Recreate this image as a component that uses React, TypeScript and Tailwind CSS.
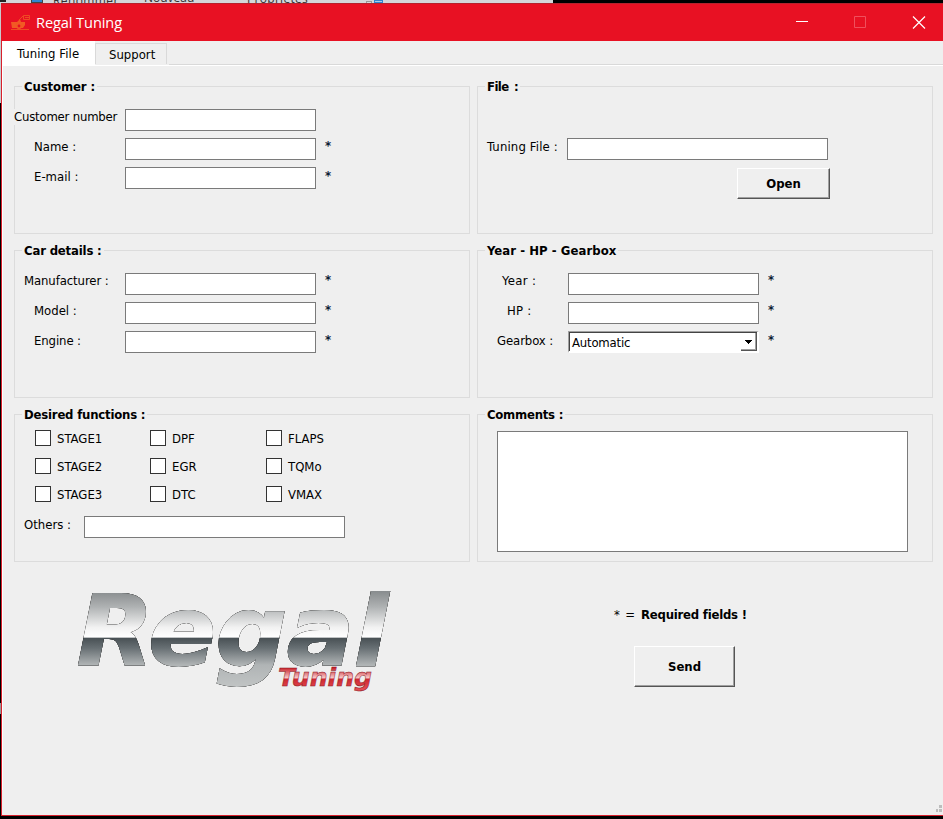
import React from 'react';

const ui = "font-['DejaVu_Sans_Condensed','DejaVu_Sans',sans-serif]";

function Group({ title, tracking = '', children }: { title: string; tracking?: string; children: React.ReactNode }) {
  return (
    <fieldset className="h-[156px] w-[456px] border border-[#dcdcdc]">
      <legend className={`ml-[7px] h-[17px] whitespace-nowrap px-[2px] text-[13px] font-bold leading-[17px] ${tracking}`}>{title}</legend>
      {children}
    </fieldset>
  );
}

function Labels({ items, className }: { items: [string, string][]; className: string }) {
  return (
    <div className={`shrink-0 whitespace-nowrap ${className}`}>
      {items.map(([text, cls]) => (
        <div key={text} className="flex h-[30px] items-center">
          <span className={`bg-[#efefef] leading-4 ${cls}`}>{text}</span>
        </div>
      ))}
    </div>
  );
}

function Field({ className = 'w-[191px]' }: { className?: string }) {
  return <input className={`block h-[22px] shrink-0 border border-[#7a7a7a] bg-white outline-none ${className}`} />;
}

function Stars({ count, className }: { count: number; className: string }) {
  return (
    <div className={`ml-[9px] text-[13px] font-bold ${className}`}>
      {Array.from({ length: count }, (_, i) => (
        <div key={i} className="h-[30px] leading-[30px] text-[#0b1c33]">*</div>
      ))}
    </div>
  );
}

function Check({ label }: { label: string }) {
  return (
    <label className="flex h-4 items-center gap-[6px] whitespace-nowrap leading-4">
      <span className="size-4 shrink-0 border border-[#333] bg-white" />
      <span className="pt-[2px]">{label}</span>
    </label>
  );
}

function Push({ label, className }: { label: string; className: string }) {
  return (
    <button className={`border border-b-[#555] border-l-white border-r-[#555] border-t-white font-bold shadow-[inset_-1px_-1px_0_#a0a0a0] ${className}`}>
      {label}
    </button>
  );
}

function Logo() {
  return (
    <svg width="345" height="124" viewBox="60 580 345 124" className="block">
      <defs>
        <linearGradient id="chrome" gradientUnits="userSpaceOnUse" x1="0" y1="590" x2="0" y2="694">
          <stop offset="0" stopColor="#85898b" />
          <stop offset=".16" stopColor="#aeb1b2" />
          <stop offset=".36" stopColor="#f2f2f2" />
          <stop offset=".455" stopColor="#ffffff" />
          <stop offset=".46" stopColor="#485054" />
          <stop offset=".56" stopColor="#687074" />
          <stop offset=".72" stopColor="#b0b4b5" />
          <stop offset="1" stopColor="#c6c9c9" />
        </linearGradient>
        <linearGradient id="ruby" gradientUnits="userSpaceOnUse" x1="0" y1="667" x2="0" y2="692">
          <stop offset="0" stopColor="#c5141d" />
          <stop offset=".42" stopColor="#f6c4c5" />
          <stop offset=".5" stopColor="#cf2a32" />
          <stop offset="1" stopColor="#e8555a" />
        </linearGradient>
      </defs>
      <g className="[filter:drop-shadow(0_0_.6px_#222)_drop-shadow(0_0_.4px_#444)]">
        <text x="77" y="664.5" fontFamily="DejaVu Sans" fontWeight="700" fontStyle="italic" fontSize="97" textLength="311" lengthAdjust="spacingAndGlyphs" fill="url(#chrome)" stroke="url(#chrome)" strokeWidth="1.8">Regal</text>
      </g>
      <text x="278" y="686" fontFamily="DejaVu Sans" fontWeight="700" fontStyle="italic" fontSize="25" textLength="94" lengthAdjust="spacingAndGlyphs" fill="url(#ruby)" stroke="#8a161e" strokeWidth=".5">Tuning</text>
    </svg>
  );
}

export default function App() {
  return (
    <div className={`flex h-[819px] w-[943px] flex-col overflow-hidden bg-black text-[13px] text-black ${ui}`}>
      <div className="relative h-[3px] w-[553px] shrink-0 overflow-hidden bg-[#d4d7da] font-['Open_Sans',sans-serif] text-[12px] leading-4 text-[#333]">
        <span className="absolute left-0 top-0 h-[2px] w-[6px] bg-[#222]" />
        <span className="absolute left-[31px] top-0 h-[3px] w-[12px] border border-t-0 border-[#444] bg-[#2f86d0]" />
        <span className="absolute left-[53px] top-[-7px] tracking-[.4px]">Renommer</span>
        <span className="absolute left-[144px] top-[-10px]">Nouveau</span>
        <span className="absolute left-[247px] top-[-9px] tracking-[.3px]">Propriétés</span>
        <span className="absolute left-[366px] top-[1px] h-[3px] w-[6px] border border-[#999]" />
        <span className="absolute left-[374px] top-0 h-[3px] w-[9px] border border-[#2f86d0] bg-[#a9cdec]" />
      </div>
      <div className="flex h-[813px] shrink-0">
        <div className="w-px shrink-0 pb-[77px]">
          <div className="h-[100px] bg-[#c8cbce]" />
          <div className="mt-[600px] h-[11px] bg-[#999]" />
        </div>
        <main className="flex w-[942px] flex-col border-b border-l border-[#d8202c] bg-[#efefef]">
          <header className="-ml-px flex h-[38px] shrink-0 items-center border-t border-[#b5222c] bg-[#e81123] pl-[10px] text-white">
            <svg width="20" height="18" viewBox="0 0 20 18" fill="none" className="mr-[5px]">
              <path d="M0 8h6l3-3 1 3h4v3l-2 3H1z" fill="#f15a24" />
              <circle cx="8" cy="12" r="2.2" fill="#e81123" stroke="#f15a24" strokeWidth="1.6" />
              <path d="M12.5 1.5h6v4h-6zM0 15.5h18M8 6l4-4M14 3.5h4" stroke="#f04a24" />
            </svg>
            <span className="pb-[2px] font-['Open_Sans',sans-serif] text-[14.6px] leading-5 tracking-[-.1px]">Regal Tuning</span>
            <svg width="130" height="14" viewBox="0 0 130 14" fill="none" className="ml-auto mr-[17px]">
              <path d="M0 5.5h12" stroke="#fff" />
              <path d="M58.5 .5h11v11h-11z" stroke="#f04f5c" />
              <path d="m117 .5 12 12m0-12-12 12" stroke="#fff" strokeWidth="1.2" />
            </svg>
          </header>
          <nav className="flex h-[25px] shrink-0 border-b border-white">
            <div className="w-[93px] bg-white pl-[15px] leading-[26px] tracking-[.08px]">Tuning File</div>
            <div className="mt-[2px] h-[21px] w-[72px] border border-b-0 border-[#d9d9d9] pl-[13px] leading-[22px]">Support</div>
            <div className="ml-[2px] flex-1 border-b border-[#d9d9d9]" />
          </nav>
          <div className="h-[724px] shrink-0 border-l border-white pl-[11px] pt-3">
            <div className="grid grid-cols-[456px_456px] gap-x-[7px] gap-y-2">
              <Group title="Customer :" tracking="tracking-[-.12px]">
                <div className="flex">
                  <Labels className="-ml-px mt-[7px] w-[111px]" items={[['Customer number', 'tracking-[-.2px]'], ['Name :', 'ml-5'], ['E-mail :', 'ml-5']]} />
                  <div className="mt-[14px] flex flex-col gap-[7px]"><Field /><Field /><Field /></div>
                  <Stars count={2} className="mt-[36px]" />
                </div>
              </Group>
              <Group title="File :" tracking="tracking-[-.6px] [word-spacing:2px]">
                <div className="mt-[37px] flex pl-[9px]">
                  <Labels className="w-[80px]" items={[['Tuning File :', 'tracking-[.15px]']]} />
                  <Field className="mt-[6px] w-[261px]" />
                </div>
                <Push label="Open" className="ml-[259px] mt-[6px] block h-[31px] w-[93px]" />
              </Group>
              <Group title="Car details :" tracking="tracking-[-.17px]">
                <div className="flex">
                  <Labels className="mt-[7px] w-[110px] pl-[9px]" items={[['Manufacturer :', 'tracking-[-.1px]'], ['Model :', 'ml-[10px]'], ['Engine :', 'ml-[10px] tracking-[-.1px]']]} />
                  <div className="mt-[14px] flex flex-col gap-[7px]"><Field /><Field /><Field /></div>
                  <Stars count={3} className="mt-[6px]" />
                </div>
              </Group>
              <Group title="Year - HP - Gearbox" tracking="tracking-[.05px]">
                <div className="flex">
                  <Labels className="mt-[7px] w-[90px] pl-[19px]" items={[['Year :', 'ml-[5px] tracking-[.35px]'], ['HP :', 'ml-[10px] tracking-[.2px]'], ['Gearbox :', 'tracking-[-.1px]']]} />
                  <div className="mt-[14px] flex flex-col gap-[7px]">
                    <Field /><Field />
                    <div className="h-[22px] w-[191px] border-b-2 border-r-2 border-white border-l border-l-[#a0a0a0] border-t border-t-[#a0a0a0]">
                      <div className="flex h-[19px] items-center justify-between border-l border-t border-[#444] bg-white pl-[2px]">
                        <span className="pt-px tracking-[-.2px]">Automatic</span>
                        <span className="flex h-[18px] w-4 items-center justify-center border-b border-r border-[#555] shadow-[inset_-1px_-1px_0_#a0a0a0]">
                          <svg width="7" height="4" viewBox="0 0 7 4" shapeRendering="crispEdges"><path d="M0 0h7L3.5 4z" /></svg>
                        </span>
                      </div>
                    </div>
                  </div>
                  <Stars count={3} className="mt-[6px]" />
                </div>
              </Group>
              <Group title="Desired functions :" tracking="tracking-[-.2px]">
                <div className="grid grid-cols-[115px_116px_100px] gap-y-3 pl-5 pt-[7px]">
                  {['STAGE1', 'DPF', 'FLAPS', 'STAGE2', 'EGR', 'TQMo', 'STAGE3', 'DTC', 'VMAX'].map((name) => <Check key={name} label={name} />)}
                </div>
                <div className="mt-[8px] flex pl-[9px]">
                  <Labels className="w-[60px]" items={[['Others :', '']]} />
                  <Field className="mt-[6px] w-[261px]" />
                </div>
              </Group>
              <Group title="Comments :" tracking="tracking-[-.25px]">
                <textarea className="ml-[19px] mt-2 block h-[121px] w-[411px] resize-none border border-[#7a7a7a] bg-white outline-none" />
              </Group>
            </div>
            <div className="mt-[18px] flex">
              <div className="ml-[46px] w-[554px]"><Logo /></div>
              <div className="pt-[26px]">
                <div className="flex whitespace-nowrap leading-[18px]">
                  <span className="w-[27px] tracking-[.8px]">* =</span>
                  <span className="font-bold tracking-[-.22px]">Required fields !</span>
                </div>
                <Push label="Send" className="ml-5 mt-[22px] block h-[41px] w-[101px]" />
              </div>
            </div>
            <div className="ml-auto mr-px mt-[101px] grid w-[6px] grid-cols-[2px_3px] gap-px">
              <span /><span className="h-[3px] bg-[#bdbdbd]" />
              <span className="h-[3px] bg-[#bdbdbd]" /><span className="h-[3px] bg-[#bdbdbd]" />
            </div>
          </div>
        </main>
      </div>
    </div>
  );
}
